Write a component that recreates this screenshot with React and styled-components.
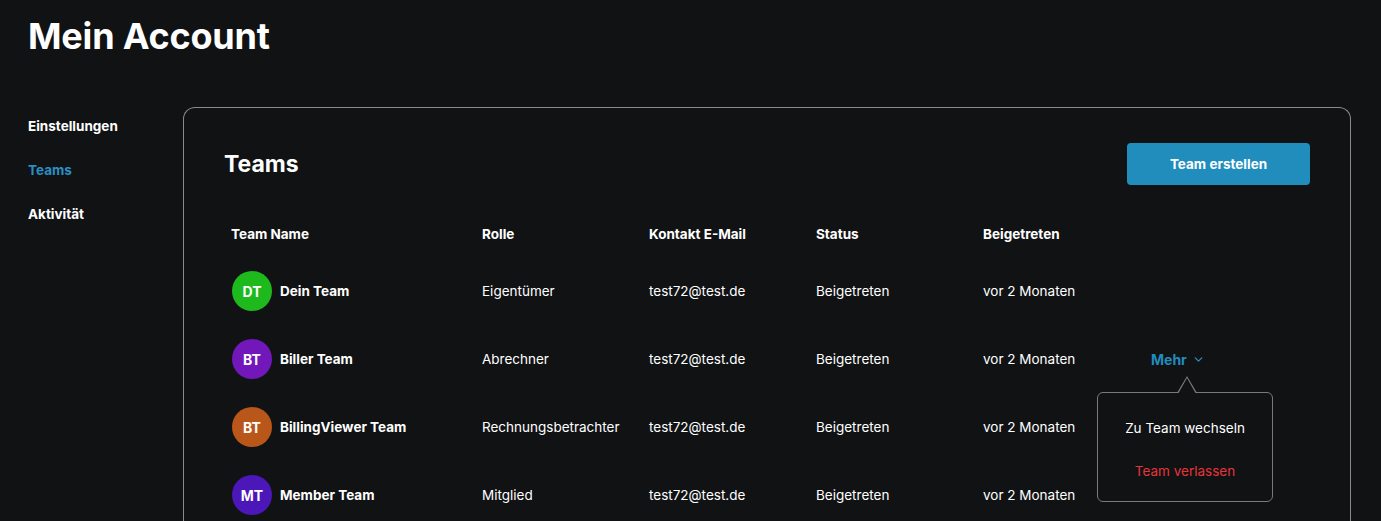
import React from 'react';
import styled, { createGlobalStyle } from 'styled-components';
import { ChevronDown } from 'lucide-react';

const GlobalStyle = createGlobalStyle`
  body {
    margin: 0;
    background: #111214;
    color: #ffffff;
    font-family: Inter, "Open Sans", sans-serif;
  }
`;

const Page = styled.div`
  padding: 14px 30px 0 28px;
  min-height: 521px;
  box-sizing: border-box;
`;

const PageTitle = styled.h1`
  margin: 0;
  font-size: 36px;
  font-weight: 700;
  line-height: 44px;
  letter-spacing: -0.2px;
`;

const Layout = styled.div`
  display: flex;
  margin-top: 49px;
`;

const Sidebar = styled.nav`
  width: 155px;
  flex-shrink: 0;
  display: flex;
  flex-direction: column;
  gap: 26px;
  padding-top: 10px;
`;

const NavItem = styled.a`
  font-size: 13.5px;
  font-weight: 700;
  line-height: 18px;
  color: ${(p) => (p.$active ? '#2a8fc2' : '#ffffff')};
  cursor: pointer;
`;

const Card = styled.section`
  flex: 1;
  border: 1px solid #8a8a8c;
  border-bottom: none;
  border-radius: 12px 12px 0 0;
  padding: 35px 40px 40px 40px;
  height: 420px;
  box-sizing: border-box;
`;

const CardHead = styled.div`
  display: flex;
  align-items: center;
  justify-content: space-between;
  height: 42px;
`;

const CardTitle = styled.h2`
  margin: 0;
  font-size: 23px;
  font-weight: 700;
`;

const PrimaryButton = styled.button`
  width: 183px;
  height: 42px;
  border: none;
  border-radius: 4px;
  background: #218dbd;
  color: #ffffff;
  font-family: inherit;
  font-size: 13.5px;
  font-weight: 700;
  cursor: pointer;
`;

const Table = styled.div`
  margin-top: 29px;
`;

const Row = styled.div`
  display: grid;
  grid-template-columns: 251px repeat(5, 167px);
  align-items: center;
  height: ${(p) => (p.$head ? '40px' : '68px')};
  margin-bottom: ${(p) => (p.$head ? '3px' : '0')};
`;

const HeadCell = styled.div`
  padding-left: 7px;
  font-size: 13.5px;
  font-weight: 700;
`;

const Cell = styled.div`
  padding-left: 7px;
  font-size: 13.5px;
  position: relative;
`;

const NameCell = styled.div`
  padding-left: 8px;
  display: flex;
  align-items: center;
  gap: 8px;
  font-size: 13.5px;
  font-weight: 700;
`;

const Avatar = styled.div`
  width: 40px;
  height: 40px;
  border-radius: 50%;
  background: ${(p) => p.$color};
  display: flex;
  align-items: center;
  justify-content: center;
  font-size: 14px;
  font-weight: 700;
`;

const MoreButton = styled.button`
  display: inline-flex;
  align-items: center;
  gap: 5px;
  background: none;
  border: none;
  padding: 0;
  margin-left: 1px;
  color: #218dbd;
  font-family: inherit;
  font-size: 14px;
  font-weight: 700;
  cursor: pointer;
`;

const Menu = styled.div`
  position: absolute;
  top: 41px;
  left: -46px;
  width: 176px;
  height: 110px;
  box-sizing: border-box;
  padding-top: 6px;
  border: 1px solid #7a7a7c;
  border-radius: 6px;
  background: #111214;
  display: flex;
  flex-direction: column;
  align-items: center;
  justify-content: center;
  gap: 23px;
  z-index: 2;

  &::before,
  &::after {
    content: '';
    position: absolute;
    left: 79px;
    width: 0;
    height: 0;
    border-left: 10px solid transparent;
    border-right: 10px solid transparent;
  }
  &::before {
    top: -17px;
    border-bottom: 17px solid #7a7a7c;
  }
  &::after {
    top: -15px;
    left: 80px;
    border-left-width: 9px;
    border-right-width: 9px;
    border-bottom: 16px solid #111214;
  }
`;

const MenuItem = styled.div`
  font-size: 13.5px;
  line-height: 20px;
  color: ${(p) => (p.$danger ? '#e8343a' : '#ffffff')};
  cursor: pointer;
`;

const teams = [
  { initials: 'DT', color: '#1db91d', name: 'Dein Team', role: 'Eigentümer' },
  { initials: 'BT', color: '#7217b9', name: 'Biller Team', role: 'Abrechner', more: true },
  { initials: 'BT', color: '#b9571a', name: 'BillingViewer Team', role: 'Rechnungsbetrachter' },
  { initials: 'MT', color: '#4c17b9', name: 'Member Team', role: 'Mitglied' },
];

export default function App() {
  return (
    <>
      <GlobalStyle />
      <Page>
        <PageTitle>Mein Account</PageTitle>
        <Layout>
          <Sidebar>
            <NavItem>Einstellungen</NavItem>
            <NavItem $active>Teams</NavItem>
            <NavItem>Aktivität</NavItem>
          </Sidebar>
          <Card>
            <CardHead>
              <CardTitle>Teams</CardTitle>
              <PrimaryButton>Team erstellen</PrimaryButton>
            </CardHead>
            <Table>
              <Row $head>
                <HeadCell>Team Name</HeadCell>
                <HeadCell>Rolle</HeadCell>
                <HeadCell>Kontakt E-Mail</HeadCell>
                <HeadCell>Status</HeadCell>
                <HeadCell>Beigetreten</HeadCell>
                <HeadCell />
              </Row>
              {teams.map((t, i) => (
                <Row key={i}>
                  <NameCell>
                    <Avatar $color={t.color}>{t.initials}</Avatar>
                    {t.name}
                  </NameCell>
                  <Cell>{t.role}</Cell>
                  <Cell>test72@test.de</Cell>
                  <Cell>Beigetreten</Cell>
                  <Cell>vor 2 Monaten</Cell>
                  <Cell>
                    {t.more && (
                      <>
                        <MoreButton>
                          Mehr <ChevronDown size={13} strokeWidth={2.5} />
                        </MoreButton>
                        <Menu>
                          <MenuItem>Zu Team wechseln</MenuItem>
                          <MenuItem $danger>Team verlassen</MenuItem>
                        </Menu>
                      </>
                    )}
                  </Cell>
                </Row>
              ))}
            </Table>
          </Card>
        </Layout>
      </Page>
    </>
  );
}
